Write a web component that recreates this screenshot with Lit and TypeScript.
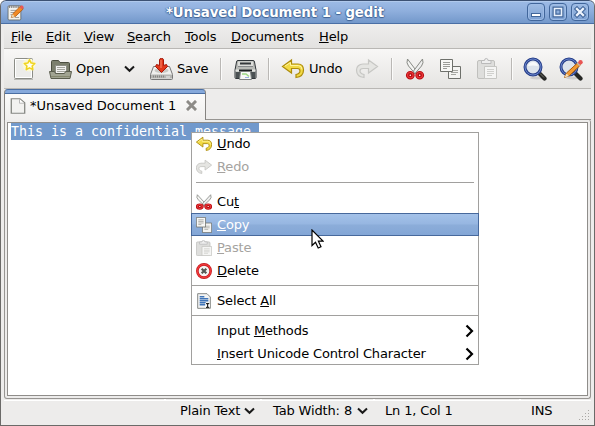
import { LitElement, html, css, svg } from "lit";
import { customElement } from "lit/decorators.js";

const icon = (name: string, size = 24, box = "0 0 24 24") =>
  html`<svg class="ico" width=${size} height=${size} viewBox=${box} preserveAspectRatio="none">${glyphs[name]}</svg>`;

const smallBox: Record<string, string> = {
  undo: "1 1.500 22 21", redo: "1 1.500 22 21", cut: "2 1 18 22", copy: "2 2 21 20",
  paste: "1 1 20 21", page: "3 1.500 18.500 21.500",
};

const glyphs: Record<string, unknown> = {
  app: svg`<rect x="1.500" y="2.500" width="18" height="20" rx="1.5" fill="#f3f3ee" stroke="#55574f"/>
    <path d="M3 4h16" stroke="#777" stroke-width="3" stroke-dasharray="1.5 1.5"/>
    <path d="M5 9h9M5 12h7M5 15h4M11 19h6" stroke="#999" stroke-width="1.3"/>
    <path d="M6 19l2-5L19 3l4 4L12 17.5z" fill="#f08a25" stroke="#a34c06"/><path d="M6 19l2-5 3 3.500z" fill="#ead6ad"/><path d="M18 4.500l3-3 3 3-3 3z" fill="#e85858"/>`,
  fresh: svg`<rect x="2.500" y="1.500" width="18" height="20" rx="1" fill="#ececea" stroke="#8b8c86"/><path d="M2 22.500h19" stroke="#b9b9b5"/>
    <path d="M3.500 2.500h16v18h-16z" fill="none" stroke="#fff"/>
    <circle cx="17" cy="8" r="6.500" fill="#fffbd0" opacity=".8"/>
    <path d="M17.500 2.800l1.700 3.200 3.600.5-2.600 2.500.6 3.600-3.300-1.700-3.200 1.700.6-3.600-2.600-2.500 3.600-.5z" fill="#fffff0" stroke="#f0d420" stroke-width="1.600" stroke-linejoin="round"/>`,
  open: svg`<path d="M3.500 17V4.500q0-1 1-1h6l1.500 2h8.500q1 0 1 1V17z" fill="#7b7f6d" stroke="#4b4e40"/>
    <path d="M7.500 8.500h11v9h-11z" fill="#f2f2f0" stroke="#8b8d84"/><path d="M9 10.500h8M9 12.500h8M9 14.500h8" stroke="#a5a69f"/>
    <path d="M1.500 14.500h5l1 2h9l1-2h6l-1.500 7h-19z" fill="#a1a492" stroke="#5a5d4e"/><path d="M3 19.500h19" stroke="#85886f"/>`,
  save: svg`<path d="M4.500 9.500h16l3 8v4q0 1-1 1h-20q-1 0-1-1v-4z" fill="#efefed" stroke="#777"/>
    <path d="M2 17.500h21v4H2z" fill="#b5b5b2"/><path d="M4 19.500h11" stroke="#858582" stroke-width="2" stroke-dasharray="1 1"/><path d="M17 20h4" stroke="#eee"/>
    <ellipse cx="12.500" cy="13.500" rx="7" ry="2.500" fill="#c9c9c5"/>
    <path d="M10.500 2.500q0-1 2-1t2 1v6l3-1 1 2-6 6-6-6 1-2 3 1z" fill="#e2381a" stroke="#a5180a"/><path d="M12 3v8" stroke="#f88a6c"/>`,
  print: svg`<path d="M3.500 5q0-1.500 1.500-1.500h15q1.500 0 1.500 1.500l1.500 8v7.500q0 1-1 1h-19q-1 0-1-1V13z" fill="#b9bbb7" stroke="#31363a"/>
    <path d="M5 4.500h15v5H5z" fill="#dcddda"/><path d="M7 6.500h11" stroke="#34383b" stroke-width="2"/><path d="M5 9.500h15" stroke="#85888a"/>
    <path d="M2.500 12.500h20v2h-20z" fill="#e4e5e2"/><path d="M3 15h19v6H3z" fill="#4b5153"/>
    <path d="M6 13.500h13" stroke="#1b1f21" stroke-width="2"/>
    <path d="M7.500 14.500h10l1 8h-12z" fill="#f8f9f7" stroke="#7d8280"/><path d="M9 17h4l3 2.500" fill="none" stroke="#9bd884" stroke-width="1.500"/><path d="M12 20.500h4" stroke="#9ab1e3"/>`,
  undo: svg`<path d="M1.500 9.500L10.500 3v4h6.500c4 0 5.500 2.800 5.500 6 0 4-2.500 7-7.500 7.500v-3c2.500-.5 4-1.800 4-3.500 0-1.600-1-2.500-2.500-2.500h-6v4.500z" fill="#f2da45" stroke="#ad8c0c" stroke-width="1.200"/><path d="M4 9l5.500-3.500V8.500h8q3.500.5 3.500 4" fill="none" stroke="#fff4a0"/>`,
  redo: svg`<path d="M22.500 9.500L13.500 3v4H8C4 7 1.500 9.800 1.500 13c0 4 2.500 7 7.500 7.500v-3c-2.500-.5-4-1.800-4-3.500C5 12.400 6 11.500 8 11.500h5.500V16z" fill="#e5e5e2" stroke="#c7c7c4" stroke-width="1.200"/>`,
  cut: svg`<path d="M3.500 2Q2 6 4.500 9l7 8 1-3z" fill="#f5f5f3" stroke="#888a85"/><path d="M18.500 2q1.500 4-1 7l-7 8-1-3z" fill="#eee" stroke="#888a85"/>
    <ellipse cx="6.300" cy="18.200" rx="2.600" ry="2.500" fill="#fff" stroke="#b80b10" stroke-width="3.600"/><ellipse cx="15.700" cy="18.200" rx="2.600" ry="2.500" fill="#fff" stroke="#b80b10" stroke-width="3.600"/>
    <ellipse cx="6.300" cy="18.200" rx="2.800" ry="2.700" fill="none" stroke="#e8383a" stroke-width="1.200"/><ellipse cx="15.700" cy="18.200" rx="2.800" ry="2.700" fill="none" stroke="#e8383a" stroke-width="1.200"/>`,
  copy: svg`<path d="M10.500 9.500h12v12h-12z" fill="#f4f4f2" stroke="#6e706b"/><path d="M13 13.500h7M13 15.500h7M13 17.500h5" stroke="#a5a6a1"/>
    <path d="M2.500 2.500h12v12h-12z" fill="#f8f8f6" stroke="#6e706b"/><path d="M5 5.500h7M5 7.500h7M5 9.500h7M5 11.500h4" stroke="#9b9c98"/>`,
  paste: svg`<rect x="1.500" y="3.500" width="17" height="18" rx="1.500" fill="#dededc" stroke="#c0c0bd"/><path d="M5.500 6.500v-3h3q0-2 1.800-2t1.700 2h3v3z" fill="#eee" stroke="#bababa"/>
    <path d="M8.500 9.500h12v12h-12z" fill="#f5f5f4" stroke="#c6c6c3"/><path d="M11 12.500h7M11 14.500h7M11 16.500h7M11 18.500h5" stroke="#d0d0cd"/>`,
  find: svg`<ellipse cx="14" cy="21" rx="7" ry="1.500" fill="#bbb" opacity=".6"/><path d="M16 16l5.500 5.500" stroke="#262725" stroke-width="4.200" stroke-linecap="round"/><path d="M17 16.500l4 4" stroke="#777870" stroke-width="1"/>
    <circle cx="10" cy="10" r="8" fill="#dde4ec" stroke="#28408b" stroke-width="3"/><circle cx="10" cy="10" r="8" fill="none" stroke="#6884ca" stroke-width="1"/><path d="M5 9q1-4 5-4t5 4q-5-1-10 0z" fill="#fff" opacity=".8"/>`,
  replace: svg`<ellipse cx="14" cy="21" rx="7" ry="1.500" fill="#bbb" opacity=".6"/><path d="M16 16l5.500 5.500" stroke="#262725" stroke-width="4.200" stroke-linecap="round"/>
    <circle cx="10" cy="10" r="8" fill="#dde4ec" stroke="#28408b" stroke-width="3"/><circle cx="10" cy="10" r="8" fill="none" stroke="#6884ca"/>
    <path d="M5.500 20.500l2-4.500L19 5.500l2.500 2.500L10.500 18.500z" fill="#f39a32" stroke="#ad5c0b"/><path d="M5.500 20.500l2-4 2.500 2.500z" fill="#f4dfb8"/><path d="M17.500 6l3 3 1-1-3-3z" fill="#bbb"/><circle cx="21.500" cy="5.300" r="2.200" fill="#e95454"/>`,
  page: svg`<path d="M4.500 2.500h10l5.500 5.500v14H4.500z" fill="#f2f2f0" stroke="#858782" stroke-width="1.500"/><path d="M14 3v5.500h5.500" fill="#fff" stroke="#aaa"/>`,
  remove: svg`<circle cx="12" cy="12" r="10" fill="#f4f4f2" stroke="#c4161c" stroke-width="3.900"/><circle cx="12" cy="12" r="10" fill="none" stroke="#ef3a3a" stroke-width="2"/><path d="M8.500 8.500l7 7m0-7l-7 7" stroke="#555753" stroke-width="3.200"/>`,
  all: svg`<path d="M2.500 1h14l5 5v17h-19z" fill="#f2f3f3" stroke="#777a76" stroke-width="1.300"/><path d="M5.500 5.500h7M5.500 8.500h13M5.500 11.500h13M5.500 14.500h9M5.500 17.500h9" stroke="#3f74b8" stroke-width="2.300"/><path d="M14 15h7v7h-7z" fill="#fff"/><path d="M15 16h5M15 21.500h5M17.500 16v5" stroke="#000" stroke-width="1.500"/>`,
};

const down = html`<svg class="ico" width="11" height="8" viewBox="0 0 11 8"><path d="M1 1.500l4.500 4.300L10 1.500" fill="none" stroke="#1a1a1a" stroke-width="2"/></svg>`;
const key = (before: string, k: string, after: string) => html`<span>${before}<u>${k}</u>${after}</span>`;

@customElement("app-root")
export class AppRoot extends LitElement {
  static styles = css`
    :host { display: block; width: 595px; height: 426px; background: #fff; }
    * { box-sizing: border-box; }
    .window { position: relative; width: 595px; height: 426px; background: #edeceb; color: #000;
      font: 13px/16px "DejaVu Sans", sans-serif; white-space: nowrap; overflow: hidden; cursor: default;
      border: 1px solid #6b6a68; border-top: 0; border-radius: 6px 6px 0 0; letter-spacing: -.15px;
      display: flex; flex-direction: column; }
    .ico { display: block; flex: none; }
    u { text-decoration: underline; text-decoration-thickness: 1px; text-underline-offset: 1px; text-decoration-skip-ink: none; }
    .title { flex: none; height: 24px; margin: 0 -1px; padding: 1px 5px 0 6px; display: flex; align-items: center; background: linear-gradient(#9dbbe6, #8fafdd 45%, #7398cb);
      border: 1px solid #46648f; border-top: 1px solid #3c5173; border-bottom: 1px solid #4a6fa5; border-radius: 6px 6px 0 0; box-shadow: inset 0 1px #b0c9ec; }
    .name { flex: 1; text-align: center; font-size: 13.33px; letter-spacing: -.08px; padding-right: 1px; font-weight: bold; color: #fff; text-shadow: 0 1px 1px #3f6191, 1px 0 1px #4f74a8, -1px 0 1px #4f74a8; }
    .controls { display: flex; gap: 4px; }
    .btn { width: 18px; height: 18px; border: 1px solid #41669b; border-radius: 4px; background: linear-gradient(#9fbce4, #7da1d3); box-shadow: inset 0 0 0 1px #9ebce6; position: relative; top: -1px; }
    .btn svg { display: block; }
    .menubar { flex: none; height: 25px; padding: 2px 0 0 7px; margin: 0 3px; border-bottom: 1px solid #b9b7b4; background: linear-gradient(#efeeed, #e3e2e0);
      display: grid; grid-template-columns: 35px 38px 43px 58px 46px 88px 40px; align-items: center; }
    .toolbar { flex: none; height: 40px; padding-left: 8px; margin: 0 3px; border-bottom: 1px solid #b9b7b4; background: linear-gradient(#f8f7f6, #e5e4e2);
      display: grid; align-items: center; grid-template-columns: 36px 28px 48px 25px 28px 43px 13px 35px 13px 28px 46px 36px 13px 34px 38px 35px 12px 36px 24px; }
    .sep { width: 2px; height: 22px; border-left: 1px solid #bab8b5; border-right: 1px solid #fbfbfa; }
    .tabs { flex: none; height: 31px; padding-left: 3px; display: flex; }
    .tab { width: 202px; display: flex; align-items: center; border: 1px solid #858380; border-bottom: 0; border-top: 1px solid #4a6ea2; border-radius: 4px 4px 0 0;
      background: linear-gradient(#86a9db 0 3px, #4a6ea2 3px 4px, #fbfbfa 4px, #f0efee); padding: 1px 8px 0 5px; }
    .tab span { width: 156px; margin-left: 4px; letter-spacing: -.03px; }
    .strip { flex: 1; margin-right: 3px; border-bottom: 1px solid #979592; }
    .book { flex: none; height: 279px; margin: 0 3px 0 3px; padding: 2px 2px 3px; border: 1px solid #979592; border-top: 0; border-radius: 0 2px 3px 3px; }
    .text { height: 274px; border: 1px solid #8f8d8a; background: #fff; padding: 0 3px; font: 13.33px/17px "DejaVu Sans Mono", monospace; letter-spacing: -.025px; color: #fff; }
    .text span { display: block; width: 248px; background: #7199cc; }
    .status { flex: 1; margin: 0 3px; display: grid; grid-template-columns: 64px 29px 71px 13px 28px 146px 40px; padding: 0 0 2px 176px; align-items: center;
      background: linear-gradient(#fff, #fff) 0 1px / 100% 1px no-repeat, linear-gradient(#fff, #fff) 160px 0 / 2px 1px no-repeat,
        linear-gradient(#fff, #fff) 256px 0 / 2px 1px no-repeat, linear-gradient(#fff, #fff) 369px 0 / 2px 1px no-repeat, linear-gradient(#fff, #fff) 515px 0 / 2px 1px no-repeat; }
    .menu { position: absolute; left: 190px; top: 132px; width: 288px; height: 233px; background: #fff; box-shadow: inset 0 0 0 1px #a1a09e; }
    .row { height: 23px; display: grid; grid-template-columns: 21px 1fr 14px; align-items: center; padding: 0 0 0 5px; }
    .off { color: #a5a3a0; }
    .hot { color: #fff; background: linear-gradient(#a4c2e9, #96b6e1 48%, #8cadd9 52%, #83a6d6); border: 1px solid #47699c; padding-left: 4px; }
    .rule { height: 7px; padding-top: 3px; }
    .rule::before { content: ""; display: block; height: 1px; background: #a1a09e; }
    .inset { height: 12px; padding: 4px 5px 0; }
    .pointer { position: absolute; left: 310px; top: 229px; }
    .grip { position: absolute; right: 4px; bottom: 4px; }
  `;

  private item(name: string, label: unknown, cls = "", more = false) {
    return html`<div class="row ${cls}">${name ? icon(name, 16, smallBox[name] ?? "0 0 24 24") : html`<i></i>`}${label}${more
      ? html`<svg class="ico" width="9" height="14" viewBox="0 0 9 14"><path d="M1.500 1.500L7 7l-5.500 5.500" fill="none" stroke="#000" stroke-width="2.200"/></svg>` : ""}</div>`;
  }

  render() {
    return html`<div class="window">
      <div class="title">${icon("app", 17)}<span class="name">*Unsaved Document 1 - gedit</span>
        <div class="controls">
          <div class="btn"><svg width="16" height="16"><rect x="3.500" y="9.500" width="9" height="3" fill="#fff" stroke="#41669b"/></svg></div>
          <div class="btn"><svg width="16" height="16"><path d="M4.500 4.500h7v7h-7z" fill="none" stroke="#41669b" stroke-width="4"/><path d="M4.500 4.500h7v7h-7z" fill="none" stroke="#e9f1fc" stroke-width="1.600"/></svg></div>
          <div class="btn"><svg width="16" height="16"><path d="M5 5l6 6m0-6l-6 6" stroke="#41669b" stroke-width="4.500" stroke-linecap="square"/><path d="M5 5l6 6m0-6l-6 6" stroke="#eef4fd" stroke-width="2.300" stroke-linecap="square"/></svg></div>
        </div></div>
      <div class="menubar">${key("", "F", "ile")}${key("", "E", "dit")}${key("", "V", "iew")}${key("", "S", "earch")}${key("", "T", "ools")}${key("", "D", "ocuments")}${key("", "H", "elp")}</div>
      <div class="toolbar">${icon("fresh")}${icon("open")}<span>Open</span>${down}${icon("save")}<span>Save</span><i class="sep"></i>${icon("print")}<i class="sep"></i>${icon("undo")}<span>Undo</span>${icon("redo")}<i class="sep"></i>${icon("cut")}${icon("copy")}${icon("paste")}<i class="sep"></i>${icon("find")}${icon("replace")}</div>
      <div class="tabs"><div class="tab">${icon("page", 16, smallBox.page)}<span>*Unsaved Document 1</span><svg class="ico" width="11" height="11"><path d="M2 2l7 7m0-7l-7 7" stroke="#8d8b87" stroke-width="3" stroke-linecap="square"/></svg></div><div class="strip"></div></div>
      <div class="book"><div class="text"><span>This is a confidential message.</span></div></div>
      <div class="status"><span>Plain Text</span>${down}<span>Tab Width:</span><span>8</span>${down}<span>Ln 1, Col 1</span><span>INS</span></div>
      <div class="menu">
        ${this.item("undo", key("", "U", "ndo"))}
        ${this.item("redo", key("", "R", "edo"), "off")}
        <div class="rule inset"></div>
        ${this.item("cut", key("Cu", "t", ""))}
        ${this.item("copy", key("", "C", "opy"), "hot")}
        ${this.item("paste", key("", "P", "aste"), "off")}
        ${this.item("remove", key("", "D", "elete"))}
        <div class="rule"></div>
        ${this.item("all", key("Select ", "A", "ll"))}
        <div class="rule"></div>
        ${this.item("", key("Input ", "M", "ethods"), "", true)}
        ${this.item("", key("", "I", "nsert Unicode Control Character"), "", true)}
      </div>
      <svg class="pointer" width="13" height="20" viewBox="0 0 13 20"><path d="M1 1v15.500l3.500-3.300 2.700 5.800 2.800-1.300-2.600-5.500H12z" fill="#fff" stroke="#000" stroke-width="1.200"/></svg>
      <svg class="grip" width="12" height="12"><path d="M10 1.500h1M7 4.500h4M4 7.500h7M1 10.500h10" stroke="#aaa8a5" stroke-dasharray="1 2"/></svg>
    </div>`;
  }
}
